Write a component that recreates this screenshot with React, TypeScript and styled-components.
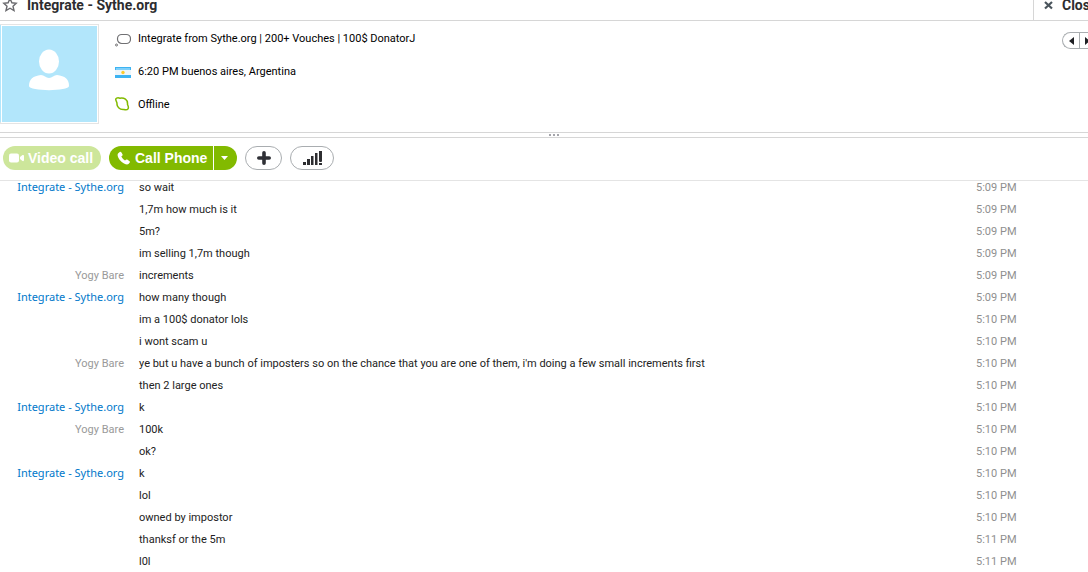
import React from "react";
import styled, { createGlobalStyle } from "styled-components";

const Global = createGlobalStyle`
  * { box-sizing: border-box; }
  body {
    margin: 0;
    background: #fff;
    color: #000;
    font: 11px/22px Roboto, Tahoma, sans-serif;
    overflow: hidden;
  }
  button { font: inherit; color: inherit; border: 0; padding: 0; background: none; cursor: pointer; }
  svg { display: block; flex: none; }
`;

const Window = styled.main`
  display: flex;
  flex-direction: column;
  height: 100vh;
  overflow: hidden;
`;

const TitleBar = styled.header`
  display: flex;
  justify-content: space-between;
  flex: none;
  height: 21px;
  border-bottom: 1px solid #d6d6d6;
  color: #2d2d30;
`;

const TitleGroup = styled.div`
  display: flex;
  align-items: flex-start;
  gap: 9px;
  padding-left: 2px;
`;

const Title = styled.h1`
  margin: 0;
  font-size: 14px;
  line-height: 10px;
`;

const CloseButton = styled.button`
  && {
    display: flex;
    align-items: flex-start;
    gap: 9px;
    width: 55px;
    padding-left: 10px;
    border-left: 1px solid #d6d6d6;
    font-size: 14px;
    font-weight: bold;
    line-height: 10px;
    white-space: nowrap;
    overflow: hidden;
  }
`;

const Profile = styled.section`
  display: flex;
  flex: none;
  height: 111px;
  padding-top: 3px;
`;

const Avatar = styled.div`
  display: flex;
  align-items: center;
  justify-content: center;
  flex: none;
  width: 99px;
  height: 100px;
  padding: 0 1px 7px 0;
  background: #b2e6fb;
  background-clip: padding-box;
  border: 1px solid #e4e4e4;
  border-width: 1px 1px 2px 0;
  outline: 1px solid #fff;
  outline-offset: -2px;
`;

const Details = styled.ul`
  flex: 1;
  display: flex;
  flex-direction: column;
  gap: 11px;
  margin: 0;
  padding: 4px 0 0 16px;
  list-style: none;
`;

const Detail = styled.li`
  display: flex;
  align-items: center;
  gap: 7px;
  height: 22px;
`;

const Pager = styled.nav`
  display: flex;
  flex: none;
  width: 26px;
  height: 17px;
  margin-top: 8px;
  border: 1px solid #a9adb0;
  border-right: 0;
  border-radius: 9px 0 0 9px;
  overflow: hidden;
`;

const PagerButton = styled.button<{ $divided?: boolean }>`
  && {
    display: flex;
    align-items: center;
    justify-content: center;
    flex: none;
    width: 16px;
    border-left: ${(p) => (p.$divided ? "1px solid #a9adb0" : "0")};
  }
`;

const Splitter = styled.div`
  display: flex;
  align-items: center;
  justify-content: center;
  gap: 2px;
  flex: none;
  height: 6px;
  padding-left: 20px;
  border: 1px solid #d6d6d6;
  border-width: 1px 0;
`;

const Dot = styled.i`
  width: 2px;
  height: 2px;
  background: #a5a5ab;
`;

const Toolbar = styled.section`
  display: flex;
  flex: none;
  gap: 8px;
  height: 43px;
  padding: 8px 3px 0;
  border-bottom: 1px solid #e4e4e4;
  font-family: "Liberation Sans", Arial, sans-serif;
`;

const CallButton = styled.button<{ $muted?: boolean; $split?: boolean }>`
  && {
    display: flex;
    align-items: center;
    gap: 4px;
    width: ${(p) => (p.$split ? "104px" : "98px")};
    height: 24px;
    padding-left: ${(p) => (p.$split ? "7px" : "6px")};
    border-radius: ${(p) => (p.$split ? "12px 0 0 12px" : "12px")};
    background: ${(p) => (p.$muted ? "#cde69b" : "#82ba00")};
    color: #fff;
    font-size: 14px;
    font-weight: bold;
    white-space: nowrap;
  }
`;

const SplitButton = styled.div`
  display: flex;
  gap: 1px;
`;

const MenuButton = styled.button`
  && {
    display: flex;
    align-items: center;
    justify-content: center;
    width: 23px;
    height: 24px;
    padding-right: 2px;
    border-radius: 0 12px 12px 0;
    background: #82ba00;
  }
`;

const PillButton = styled.button<{ $wide?: boolean }>`
  && {
    display: flex;
    align-items: center;
    justify-content: center;
    width: ${(p) => (p.$wide ? "44px" : "37px")};
    height: 24px;
    border: 1px solid #a9adb0;
    border-radius: 12px;
  }
`;

const Log = styled.section`
  flex: 1;
  min-height: 0;
  overflow: hidden;
`;

const Sender = styled.span<{ $own?: boolean }>`
  text-align: right;
  font-family: ${(p) => (p.$own ? "Roboto" : '"Noto Sans"')}, Tahoma, sans-serif;
  line-height: ${(p) => (p.$own ? "22px" : "20px")};
  color: ${(p) => (p.$own ? "#999" : "#0078ca")};
`;

const Row = styled.div`
  display: grid;
  grid-template-columns: 124px minmax(0, 1fr) 112px;
  column-gap: 15px;
  height: 22px;
  line-height: 22px;
  white-space: nowrap;

  &:first-child { height: 18px; line-height: 14px; }
  &:first-child ${Sender} { line-height: 12px; }
`;

const Message = styled.span`
  color: #222;
`;

const Time = styled.time`
  color: #8f8f8f;
`;

const PEER = "Integrate - Sythe.org";
const ME = "Yogy Bare";

const messages: [string, string, string][] = [
  [PEER, "so wait", "5:09 PM"],
  ["", "1,7m how much is it", "5:09 PM"],
  ["", "5m?", "5:09 PM"],
  ["", "im selling 1,7m though", "5:09 PM"],
  [ME, "increments", "5:09 PM"],
  [PEER, "how many though", "5:09 PM"],
  ["", "im a 100$ donator lols", "5:10 PM"],
  ["", "i wont scam u", "5:10 PM"],
  [ME, "ye but u have a bunch of imposters so on the chance that you are one of them, i'm doing a few small increments first", "5:10 PM"],
  ["", "then 2 large ones", "5:10 PM"],
  [PEER, "k", "5:10 PM"],
  [ME, "100k", "5:10 PM"],
  ["", "ok?", "5:10 PM"],
  [PEER, "k", "5:10 PM"],
  ["", "lol", "5:10 PM"],
  ["", "owned by impostor", "5:10 PM"],
  ["", "thanksf or the 5m", "5:11 PM"],
  ["", "l0l", "5:11 PM"],
];

const StarIcon = () => (
  <svg width="16" height="12" viewBox="0 0 16 12">
    <path d="M8 -1.5 L9.9 2.8 L14.2 3.2 L11 6.2 L12 10.5 L8 8.2 L4 10.5 L5 6.2 L1.8 3.2 L6.1 2.8 Z" fill="#fff" stroke="#6a6a6e" strokeWidth="1.4" />
  </svg>
);

const CloseIcon = () => (
  <svg width="9" height="10" viewBox="0 0 9 10">
    <path d="M1 2 L8 8.5 M8 2 L1 8.5" stroke="#4a545c" strokeWidth="2.2" />
  </svg>
);

const PersonIcon = () => (
  <svg width="42" height="42" viewBox="0 0 42 42">
    <ellipse cx="21" cy="12.500" rx="10" ry="12" fill="#fff" />
    <path d="M1 37 C1 30 5 27 13 26 C16 26 18 29 21 29 C24 29 26 26 29 26 C37 27 41 30 41 37 C41 42.500 1 42.500 1 37 Z" fill="#fff" />
  </svg>
);

const MoodIcon = () => (
  <svg width="16" height="16" viewBox="0 0 16 16">
    <rect x="2.500" y="3.500" width="13" height="9" rx="4.200" fill="#fff" stroke="#707073" strokeWidth="1.200" />
    <circle cx="1.500" cy="14" r="1" fill="none" stroke="#707073" />
  </svg>
);

const FlagIcon = () => (
  <svg width="16" height="11" viewBox="0 0 16 11">
    <rect width="16" height="11" fill="#3db3f2" />
    <rect x="1" y="1" width="14" height="2" fill="#7fd0fa" />
    <rect y="3" width="16" height="5" fill="#eef6fb" />
    <circle cx="8" cy="5.500" r="1.700" fill="#fccb2d" />
  </svg>
);

const OfflineIcon = () => (
  <svg width="16" height="16" viewBox="0 0 16 16">
    <path d="M1 3.500 C0 1 2.500 0.300 5 1.200 C9 0.500 13 2.500 12.500 7.500 C14.500 11.500 13 13.500 9 12.500 C4.500 13 1.500 9.500 2 6 Z" fill="#fff" stroke="#82ba00" strokeWidth="1.500" />
  </svg>
);

const VideoIcon = () => (
  <svg width="15" height="10" viewBox="0 0 15 10">
    <rect y="0.500" width="10" height="9" rx="2" fill="#fff" />
    <path d="M11 4 L13.500 2 Q15 1.500 15 3 V7 Q15 8.500 13.500 8 L11 6 Z" fill="#fff" />
  </svg>
);

const PhoneIcon = () => (
  <svg width="15" height="14" viewBox="-1 0 15 14">
    <path d="M1 2.500 L3 0.800 Q3.800 0.500 4.300 1.200 L5.600 3.600 Q5.800 4.300 5.200 4.800 L4.300 5.600 Q5.500 8 8 9.500 L9 8.700 Q9.600 8.200 10.200 8.600 L12.600 10.200 Q13.200 10.800 12.800 11.400 L11.500 13 Q10 14 7 12.500 Q2 9.800 0.700 5 Q0.400 3.300 1 2.500 Z" fill="#fff" />
  </svg>
);

const CaretIcon = () => (
  <svg width="7" height="4" viewBox="0 0 7 4">
    <path d="M0 0 H7 L3.500 4 Z" fill="#fff" />
  </svg>
);

const PlusIcon = () => (
  <svg width="14" height="14" viewBox="0 0 14 14">
    <path d="M7 1.800 V12.200 M1.800 7 H12.200" stroke="#2f3036" strokeWidth="3.600" strokeLinecap="round" />
  </svg>
);

const SignalIcon = () => (
  <svg width="20" height="14" viewBox="-1 0 20 14" fill="#2d2d30">
    <path d="M0 11 H3 V14 H0 Z M4 8 H7 V14 H4 Z M8 5 H10.500 V14 H8 Z M12 2 H14.500 V14 H12 Z M16 0 H19 V10 L18.500 11 H16.500 L16 10 Z M16 12 H19 V14 H16 Z" />
  </svg>
);

const ArrowIcon = ({ flip }: { flip?: boolean }) => (
  <svg width="5" height="8" viewBox="0 0 5 8">
    <path d={flip ? "M0 0 L5 4 L0 8 Z" : "M5 0 L0 4 L5 8 Z"} fill="#1f2024" />
  </svg>
);

export default function App() {
  return (
    <Window>
      <Global />
      <TitleBar>
        <TitleGroup>
          <StarIcon />
          <Title>Integrate - Sythe.org</Title>
        </TitleGroup>
        <CloseButton>
          <CloseIcon />
          Close
        </CloseButton>
      </TitleBar>

      <Profile>
        <Avatar><PersonIcon /></Avatar>
        <Details>
          <Detail><MoodIcon />Integrate from Sythe.org | 200+ Vouches | 100$ DonatorJ</Detail>
          <Detail><FlagIcon />6:20 PM buenos aires, Argentina</Detail>
          <Detail><OfflineIcon />Offline</Detail>
        </Details>
        <Pager>
          <PagerButton aria-label="Previous"><ArrowIcon /></PagerButton>
          <PagerButton aria-label="Next" $divided><ArrowIcon flip /></PagerButton>
        </Pager>
      </Profile>

      <Splitter><Dot /><Dot /><Dot /></Splitter>

      <Toolbar>
        <CallButton $muted><VideoIcon />Video call</CallButton>
        <SplitButton>
          <CallButton $split><PhoneIcon />Call Phone</CallButton>
          <MenuButton aria-label="Call options"><CaretIcon /></MenuButton>
        </SplitButton>
        <PillButton aria-label="Add"><PlusIcon /></PillButton>
        <PillButton $wide aria-label="Call quality"><SignalIcon /></PillButton>
      </Toolbar>

      <Log>
        {messages.map(([sender, text, time], i) => (
          <Row key={i}>
            <Sender $own={sender === ME}>{sender}</Sender>
            <Message>{text}</Message>
            <Time>{time}</Time>
          </Row>
        ))}
      </Log>
    </Window>
  );
}
